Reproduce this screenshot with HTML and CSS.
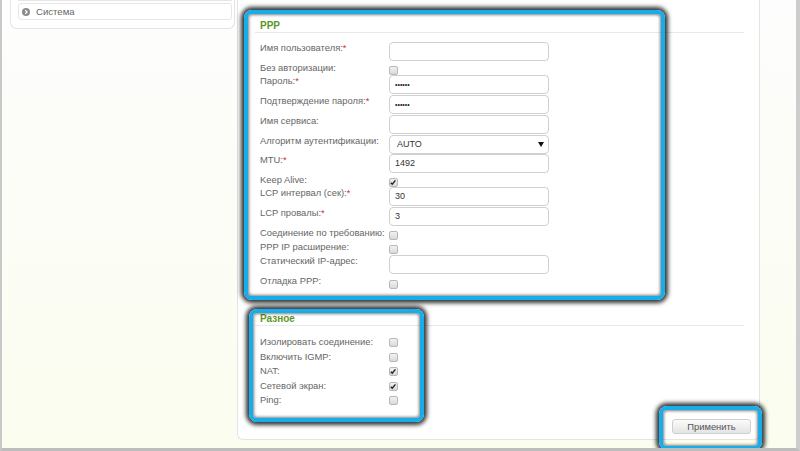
FILE: index.html
```html
<!DOCTYPE html>
<html lang="ru">
<head>
<meta charset="utf-8">
<title>PPP</title>
<link rel="stylesheet" href="styles.css">
</head>
<body>
<div class="window">
  <aside class="sidebar">
    <div class="side-item side-item-cut"></div>
    <div class="side-item">
      <span class="side-icon"><svg width="8" height="8" viewBox="0 0 8 8"><circle cx="4" cy="4" r="4" fill="#8c8c8c"/><path d="M3.2 2.1 L5.1 4 L3.2 5.9" fill="none" stroke="#fff" stroke-width="1.3"/></svg></span>
      <span class="side-text">Система</span>
    </div>
  </aside>

  <main class="content">
    <section class="group">
      <h2 class="group-title">PPP</h2>
      <div class="rows">
        <div class="row row-in"><span class="lbl">Имя пользователя:<span class="req">*</span></span><span class="field"></span></div>
        <div class="row row-cb"><span class="lbl">Без авторизации:</span><span class="cb"></span></div>
        <div class="row row-in"><span class="lbl">Пароль:<span class="req">*</span></span><span class="field"><span class="dots">••••••</span></span></div>
        <div class="row row-in"><span class="lbl">Подтверждение пароля:<span class="req">*</span></span><span class="field"><span class="dots">••••••</span></span></div>
        <div class="row row-in"><span class="lbl">Имя сервиса:</span><span class="field"></span></div>
        <div class="row row-sel"><span class="lbl">Алгоритм аутентификации:</span><span class="field field-select"><span>AUTO</span><svg class="arrow" width="6" height="5" viewBox="0 0 6 5"><path d="M0 0 H6 L3 5 Z" fill="#111"/></svg></span></div>
        <div class="row row-in"><span class="lbl">MTU:<span class="req">*</span></span><span class="field">1492</span></div>
        <div class="row row-cb"><span class="lbl">Keep Alive:</span><span class="cb cb-on"><svg width="9" height="9" viewBox="0 0 9 9"><path d="M2 4.7 L3.7 6.5 L7.2 2.1" fill="none" stroke="#222" stroke-width="1.6"/></svg></span></div>
        <div class="row row-in"><span class="lbl">LCP интервал (сек):<span class="req">*</span></span><span class="field">30</span></div>
        <div class="row row-in"><span class="lbl">LCP провалы:<span class="req">*</span></span><span class="field">3</span></div>
        <div class="row row-cb2"><span class="lbl">Соединение по требованию:</span><span class="cb"></span></div>
        <div class="row row-cb2"><span class="lbl">PPP IP расширение:</span><span class="cb"></span></div>
        <div class="row row-in"><span class="lbl">Статический IP-адрес:</span><span class="field"></span></div>
        <div class="row row-cb2"><span class="lbl">Отладка PPP:</span><span class="cb cb-low"></span></div>
      </div>
    </section>

    <section class="group group-misc">
      <h2 class="group-title">Разное</h2>
      <div class="rows rows-misc">
        <div class="row row-m"><span class="lbl">Изолировать соединение:</span><span class="cb cb-m"></span></div>
        <div class="row row-m"><span class="lbl">Включить IGMP:</span><span class="cb cb-m"></span></div>
        <div class="row row-m"><span class="lbl">NAT:</span><span class="cb cb-m cb-on"><svg width="9" height="9" viewBox="0 0 9 9"><path d="M2 4.7 L3.7 6.5 L7.2 2.1" fill="none" stroke="#222" stroke-width="1.6"/></svg></span></div>
        <div class="row row-m"><span class="lbl">Сетевой экран:</span><span class="cb cb-m cb-on"><svg width="9" height="9" viewBox="0 0 9 9"><path d="M2 4.7 L3.7 6.5 L7.2 2.1" fill="none" stroke="#222" stroke-width="1.6"/></svg></span></div>
        <div class="row row-m"><span class="lbl">Ping:</span><span class="cb cb-m"></span></div>
      </div>
    </section>

    <div class="actions"><button class="btn" type="button">Применить</button></div>

    <div class="mark mark-ppp"></div>
    <div class="mark mark-misc"></div>
    <div class="mark mark-btn"></div>
  </main>
</div>
</body>
</html>
```

FILE: styles.css
```css
html, body {
  margin: 0;
  padding: 0;
}

body {
  width: 800px;
  height: 451px;
  overflow: hidden;
  font-family: "Liberation Sans", Arial, sans-serif;
  font-size: 9.4px;
  color: #666;
}

.window {
  width: 800px;
  height: 451px;
  box-sizing: border-box;
  border-left: 2px solid #c8c8c8;
  border-right: 4px solid #cdcdcd;
  border-bottom: 3px solid #bdbdbd;
  background: linear-gradient(#fdfdfd, #fbfdef);
  display: flex;
  align-items: flex-start;
  overflow: hidden;
}

/* sidebar */
.sidebar {
  margin-left: 8px;
  width: 225px;
  height: 29px;
  box-sizing: border-box;
  border: 1px solid #e4e4e4;
  border-top: none;
  border-radius: 0 0 7px 7px;
  background: #fff;
  padding: 0 2px 0 7px;
}

.side-item {
  box-sizing: border-box;
  height: 17px;
  margin-top: 2px;
  border: 1px solid #e6e6e6;
  border-radius: 3px;
  display: flex;
  align-items: center;
  padding-left: 3px;
  gap: 6px;
}

.side-item-cut {
  height: 1px;
  margin-top: 0;
  border-top: none;
  border-radius: 0 0 3px 3px;
}

.side-icon {
  display: flex;
}

.side-text {
  color: #666;
  font-size: 9.6px;
}

/* content */
.content {
  position: relative;
  margin-left: 2px;
  width: 523px;
  box-sizing: border-box;
  border: 1px solid #e4e4e4;
  border-top: none;
  border-radius: 0 0 6px 6px;
  background: #fff;
  padding: 19px 0 5px;
}

.group-title {
  margin: 0 15px 0 17px;
  padding-left: 5px;
  font-size: 10px;
  line-height: 13px;
  font-weight: bold;
  color: #5f961f;
  border-bottom: 1px solid #e9e9e9;
}

.group-misc {
  margin-top: 23px;
}

.rows {
  margin-top: 9px;
  padding-left: 22px;
}

.rows-misc {
  margin-top: 10px;
}

.row {
  display: flex;
  align-items: flex-start;
}

.row-in { height: 20px; }
.row-sel { height: 19px; }
.row-cb { height: 13px; }
.row-cb2 { height: 14px; }
.row-m { height: 14.5px; }

.lbl {
  width: 129px;
  flex: none;
  line-height: 12px;
  white-space: nowrap;
  color: #666;
}

.req {
  color: #e0282a;
}

.field {
  width: 160px;
  height: 19px;
  box-sizing: border-box;
  border: 1px solid #d0d0d0;
  border-radius: 4px;
  padding: 0 5px;
  line-height: 17px;
  font-size: 9px;
  color: #333;
  background: #fff;
  display: flex;
  align-items: center;
}

.field-select {
  justify-content: space-between;
  padding-right: 4px;
  padding-left: 7px;
}

.dots {
  font-size: 7px;
  color: #222;
  letter-spacing: 0;
}

.cb {
  width: 9px;
  height: 9px;
  box-sizing: border-box;
  margin-top: 4px;
  border: 1px solid #b8b8b8;
  border-radius: 2px;
  background: linear-gradient(#f2f2f2, #d9d9d9);
  display: flex;
}

.cb svg {
  margin: -1px 0 0 -1px;
}

.cb-low {
  margin-top: 5px;
}

.cb-m {
  margin-top: 2px;
}

/* button */
.actions {
  display: flex;
  justify-content: flex-end;
  margin-top: 10px;
  padding-right: 8px;
}

.btn {
  width: 79px;
  height: 15px;
  padding: 0;
  border: 1px solid #cfcfcf;
  border-radius: 3px;
  background: linear-gradient(#fbfbfb, #e4e4e4);
  font-family: "Liberation Sans", Arial, sans-serif;
  font-size: 9.4px;
  line-height: 13px;
  color: #555;
}

/* highlight annotations over the content */
.mark {
  position: absolute;
  box-sizing: border-box;
  border: 4px solid #17adea;
  border-radius: 8px;
  box-shadow: 0 0 4px 3px rgba(0, 0, 0, 0.8), inset 0 0 3px 1px rgba(0, 0, 0, 0.5);
  pointer-events: none;
}

.mark-ppp {
  left: 6px;
  top: 10px;
  width: 421px;
  height: 290px;
}

.mark-misc {
  left: 11px;
  top: 309px;
  width: 175px;
  height: 113px;
}

.mark-btn {
  left: 421px;
  top: 406px;
  width: 103px;
  height: 44px;
}
```
